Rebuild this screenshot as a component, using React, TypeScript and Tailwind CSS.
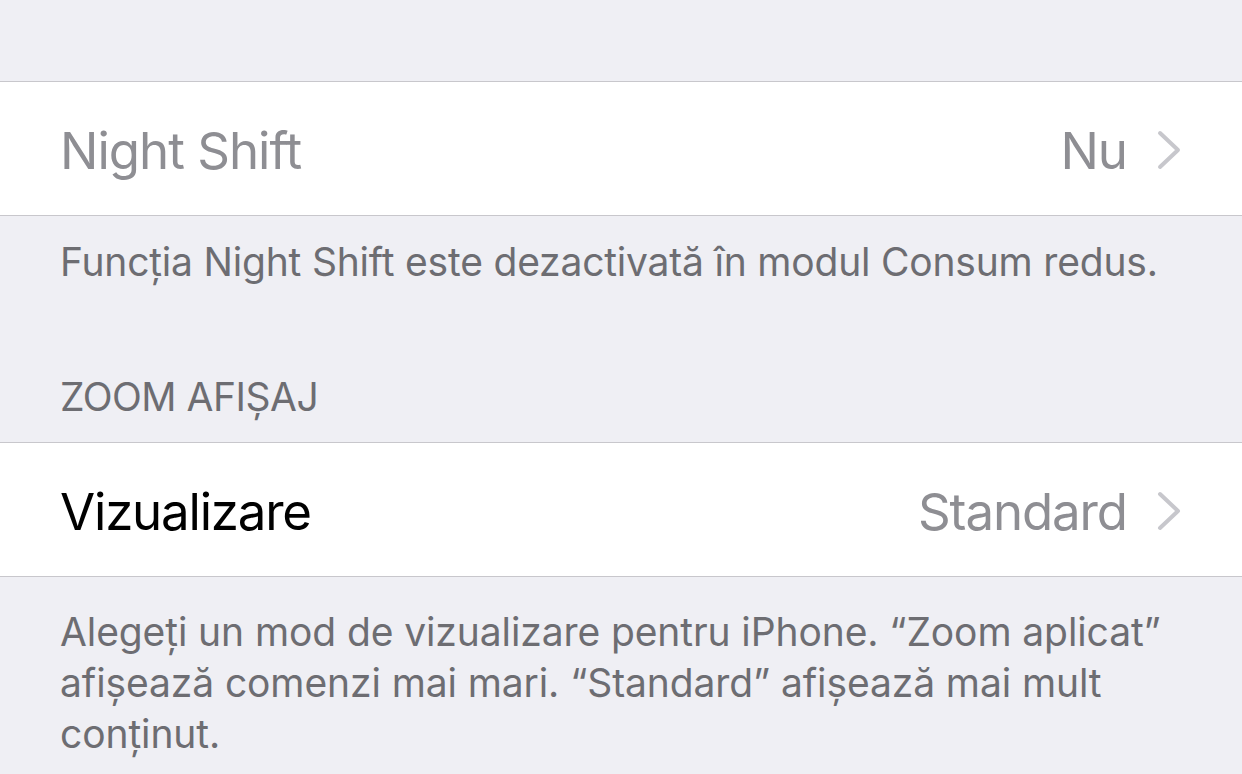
import React from "react";

const Chevron = () => (
  <svg width="26" height="40" viewBox="0 0 26 40" className="shrink-0">
    <path d="M3 3 L21 20 L3 37" fill="none" stroke="#c7c7cc" strokeWidth="4" strokeLinecap="round" strokeLinejoin="round" />
  </svg>
);

export default function App() {
  return (
    <div
      className="w-[1242px] h-[774px] overflow-hidden bg-[#efeff4]"
      style={{ fontFamily: "Inter, 'Noto Sans', sans-serif" }}
    >
      <div className="h-[81px]" />
      <div className="h-[135px] border-y border-[#c8c7cc] bg-white flex items-center justify-between pl-[60px] pr-[59px]">
        <span className="text-[51px] text-[#8e8e93] tracking-[-1px] pt-[5px]">Night Shift</span>
        <div className="flex items-center gap-[30px] pt-[2px]">
          <span className="text-[51px] text-[#8e8e93] tracking-[-1px] pt-[3px]">Nu</span>
          <Chevron />
        </div>
      </div>
      <p className="pt-[21px] pl-[60px] text-[39px] leading-[49px] text-[#6d6d72] tracking-[-0.2px]">
        Funcția Night Shift este dezactivată în modul Consum redus.
      </p>
      <p className="mt-[86px] pb-[21px] pl-[60px] text-[39px] leading-[49px] text-[#6d6d72] tracking-[-0.5px]">
        ZOOM AFIȘAJ
      </p>
      <div className="h-[135px] border-y border-[#c8c7cc] bg-white flex items-center justify-between pl-[60px] pr-[59px]">
        <span className="text-[51px] text-black tracking-[-1.2px] pt-[5px]">Vizualizare</span>
        <div className="flex items-center gap-[30px] pt-[2px]">
          <span className="text-[51px] text-[#8e8e93] tracking-[-1.1px] pt-[3px]">Standard</span>
          <Chevron />
        </div>
      </div>
      <p className="pt-[29px] pl-[60px] text-[39px] leading-[51px] text-[#6d6d72] tracking-[-0.1px]">
        Alegeți un mod de vizualizare pentru iPhone. “Zoom aplicat”
        <br />
        afișează comenzi mai mari. “Standard” afișează mai mult
        <br />
        conținut.
      </p>
    </div>
  );
}
